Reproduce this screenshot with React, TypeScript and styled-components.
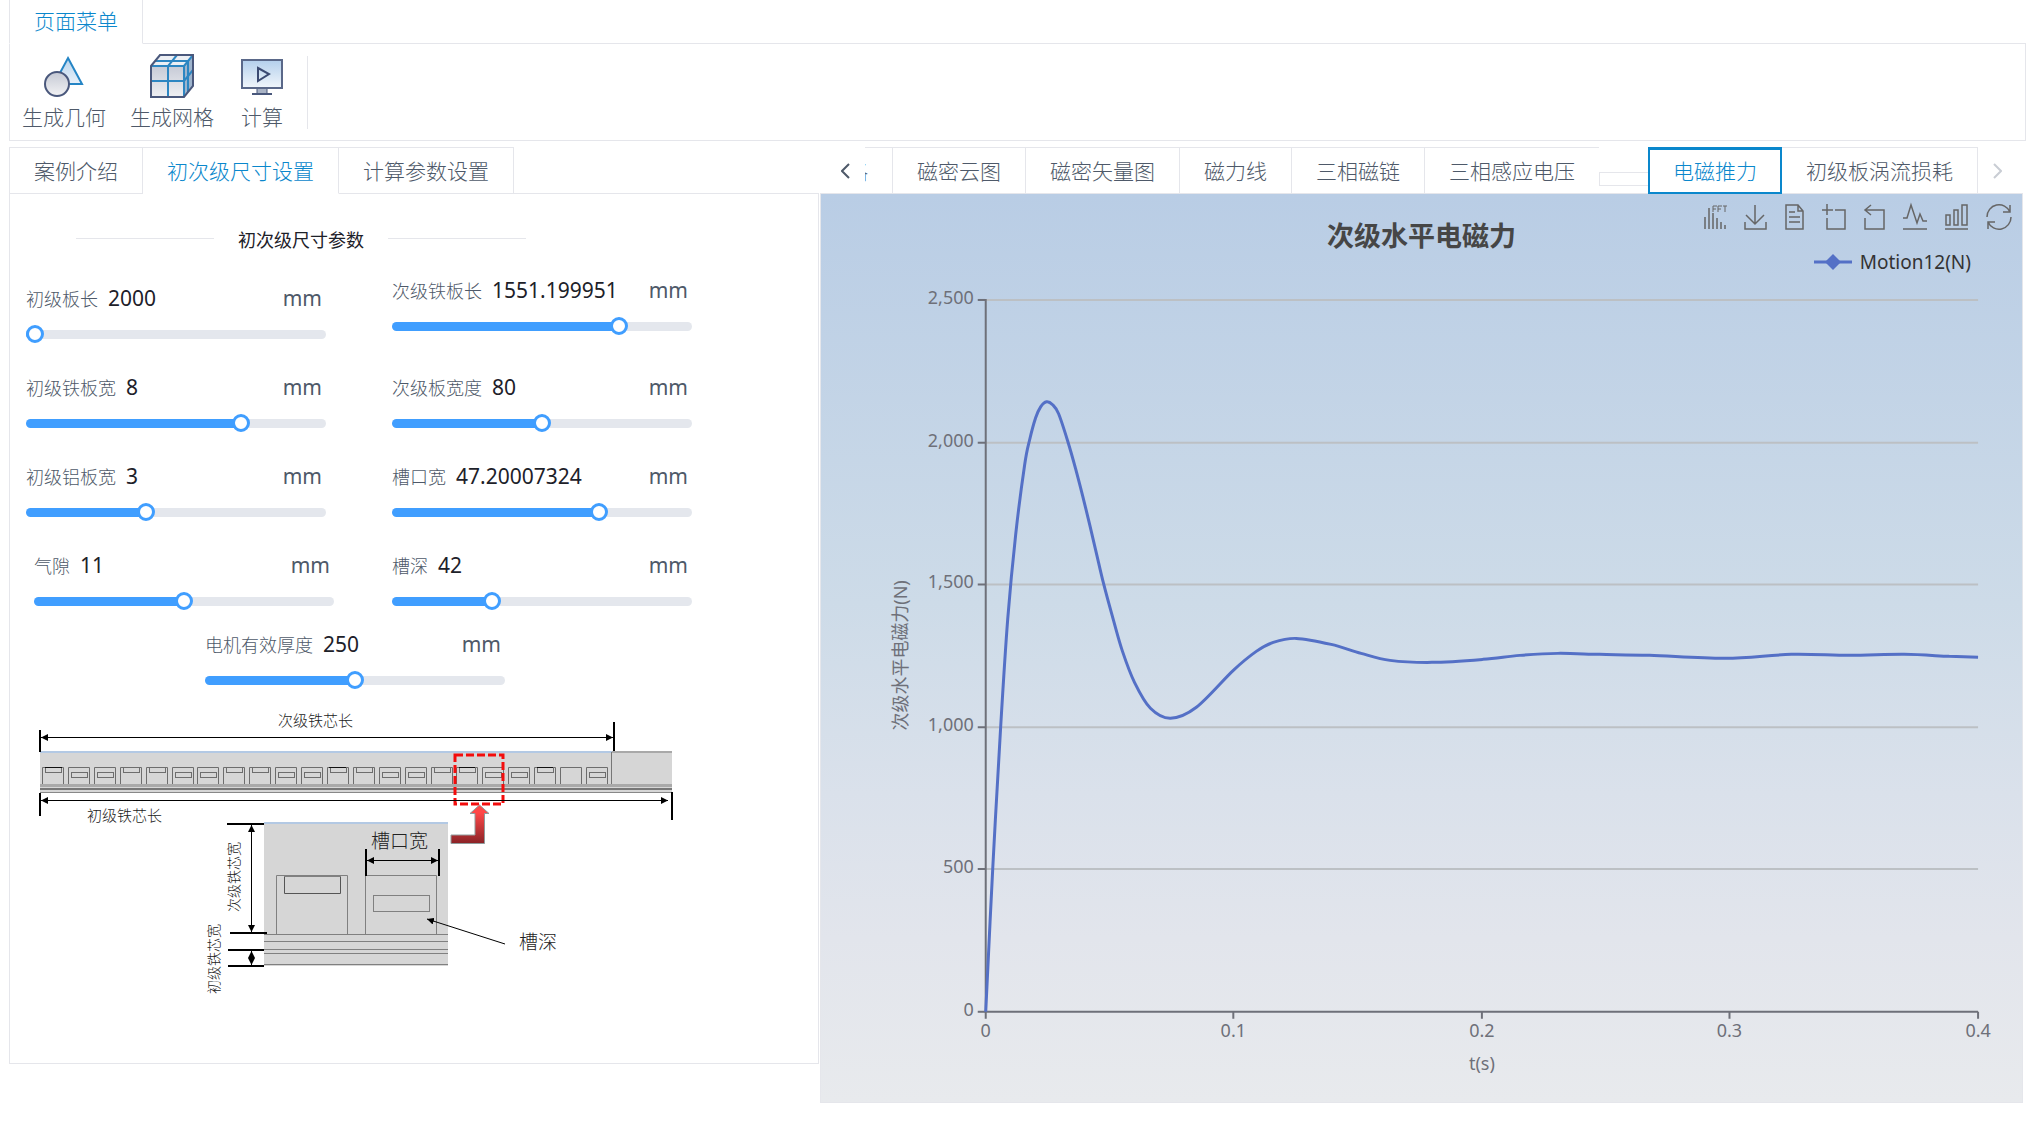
import React, { useState } from 'react';
import styled, { createGlobalStyle } from 'styled-components';

const GlobalStyle = createGlobalStyle`
  * { box-sizing: border-box; }
  body {
    margin: 0;
    background: #fff;
    color: #4e5969;
    font-family: "Noto Sans", "Noto Sans CJK SC", sans-serif;
    font-size: 21px;
  }
  button { font: inherit; font-weight: 300; color: inherit; background: none; border: 0; padding: 0; cursor: pointer; }
`;

const line = '#e5e6eb';
const accent = '#0a87cc';

const Page = styled.div`
  display: flex;
  flex-direction: column;
  gap: 6px;
  padding: 0 7px 20px 9px;
`;

const TabBar = styled.div<{ $h: number }>`
  display: flex;
  height: ${p => p.$h}px;
  box-shadow: inset 0 -1px 0 ${line};
`;

const Tab = styled.button<{ $active?: boolean; $top?: boolean }>`
  flex: none;
  padding: 0 24px ${p => (p.$top ? 0 : 2)}px;
  border-right: 1px solid ${line};
  border-top: ${p => (p.$top ? `1px solid ${line}` : '0')};
  border-bottom: 1px solid ${p => (p.$active ? '#fff' : line)};
  color: ${p => (p.$active ? accent : 'inherit')};
  white-space: nowrap;
  line-height: 30px;
  &:first-child { border-left: 1px solid ${line}; }
`;

const Toolbar = styled.div`
  display: flex;
  height: 97px;
  padding: 8px 12px 11px;
  border: 1px solid ${line};
  border-top: 0;
`;

const ToolGroup = styled.div`
  display: flex;
  gap: 24px;
  padding-right: 21px;
  border-right: 1px solid ${line};
  margin: 4px 0 0;
  height: 73px;
`;

const Tool = styled.button`
  display: flex;
  flex-direction: column;
  align-items: center;
  justify-content: space-between;
  min-width: 48px;
  line-height: 24px;
  svg { margin-top: -2px; }
`;

const Main = styled.main`
  display: grid;
  grid-template-columns: 810fr 1203fr;
  gap: 1px;
  padding-right: 3px;
  align-items: start;
`;

const Side = styled.section`min-width: 0;`;

const SideBody = styled.div`
  border: 1px solid ${line};
  border-top: 0;
  padding: 31px 16px 63px;
`;

const Divider = styled.div`
  display: flex;
  align-items: center;
  gap: 24px;
  width: 450px;
  height: 27px;
  margin: 0 0 24px 50px;
  font-size: 18px;
  color: #1d2129;
  white-space: nowrap;
  &::before, &::after { content: ""; flex: 1; height: 1px; background: ${line}; }
`;

const Fields = styled.div`
  display: grid;
  grid-template-columns: 300px 300px;
  gap: 30px 66px;
  align-items: end;
`;

const FieldBox = styled.div<{ $raised?: boolean; $indent?: boolean }>`
  width: 300px;
  padding-bottom: ${p => (p.$raised ? 12 : 4)}px;
  margin-left: ${p => (p.$indent ? 8 : 0)}px;
`;

const FieldHead = styled.div`
  display: flex;
  align-items: baseline;
  height: 28px;
  line-height: 28px;
  margin-bottom: 18px;
  padding-right: 4px;
  label { font-size: 18px; font-weight: 300; margin-right: 10px; }
  output { color: #1d2129; flex: 1; }
`;

const Range = styled.input`
  display: block;
  appearance: none;
  width: 100%;
  height: 9px;
  margin: 0;
  border-radius: 5px;
  background: linear-gradient(#409eff, #409eff) no-repeat #e4e7ed;
  background-size: calc(9px + (100% - 18px) * var(--fill)) 100%;
  &::-webkit-slider-runnable-track { height: 9px; }
  &::-webkit-slider-thumb {
    appearance: none;
    width: 18px;
    height: 18px;
    margin-top: -5px;
    border: 3px solid #409eff;
    border-radius: 50%;
    background: #fff;
  }
`;

const CenterField = styled.div`
  margin: 20px 0 0 179px;
`;

const Drawing = styled.svg`
  display: block;
  margin-top: 11px;
  text { font-family: "Noto Sans CJK SC", sans-serif; font-weight: 300; fill: #222; }
`;

const Result = styled.section`min-width: 0;`;

const ResultTabs = styled.div`
  display: flex;
  height: 47px;
  box-shadow: inset 0 -1px 0 ${line};
`;

const Arrow = styled.button<{ $w: number; $muted?: boolean }>`
  flex: none;
  width: ${p => p.$w}px;
  color: ${p => (p.$muted ? '#c9cdd4' : '#4e5969')};
  display: flex;
  align-items: center;
  justify-content: flex-end;
  padding-right: ${p => (p.$muted ? 21 : 15)}px;
`;

const Strip = styled.div`
  display: flex;
  flex: 1;
  overflow: hidden;
`;

const ResultTab = styled.button<{ $edge?: 'left' | 'open' }>`
  display: flex;
  flex: none;
  justify-content: flex-end;
  align-items: center;
  width: ${p => (p.$edge === 'left' ? '28px' : 'auto')};
  overflow: hidden;
  padding: 0 24px;
  padding-left: ${p => (p.$edge === 'left' ? 0 : 24)}px;
  border-top: 1px solid ${line};
  border-bottom: 1px solid ${line};
  border-right: ${p => (p.$edge === 'open' ? 0 : 1)}px solid ${line};
  white-space: nowrap;
  line-height: 30px;
`;

const ActiveTab = styled.button`
  flex: none;
  width: 134px;
  border: 2px solid ${accent};
  border-top-width: 3px;
  color: ${accent};
  white-space: nowrap;
  line-height: 30px;
`;

const TabGap = styled.div`
  flex: none;
  align-self: flex-end;
  width: 49px;
  height: 14px;
  margin-bottom: 8px;
  border: 1px solid ${line};
  border-right: 0;
`;

const ChartPanel = styled.div`
  background: linear-gradient(#b9cde5 0%, #cddbe8 45%, #dae1eb 66%, #e2e5ec 82%, #e8eaed 100%);
  border: 1px solid ${line};
  border-top: 0;
`;

const ChartHead = styled.header`
  display: grid;
  grid-template-columns: 1fr auto 1fr;
  height: 52px;
  padding: 10px 10px 0;
`;

const ChartTitle = styled.h2`
  grid-column: 2;
  margin: 12px 0 0;
  font-size: 27px;
  line-height: 40px;
  font-weight: 700;
  color: #464646;
`;

const Toolbox = styled.div`
  display: flex;
  justify-content: flex-end;
  gap: 18px;
  height: 26px;
  color: #666;
  svg { display: block; }
`;

const Legend = styled.div`
  display: flex;
  justify-content: flex-end;
  align-items: center;
  gap: 8px;
  height: 32px;
  padding-right: 51px;
  font-size: 19px;
  line-height: 30px;
  color: #333;
`;

const Plot = styled.svg`
  display: block;
  width: 100%;
  height: auto;
  text { font-family: "Noto Sans", "Noto Sans CJK SC", sans-serif; font-size: 18px; fill: #6e7079; }
`;

type FieldProps = {
  id: string; label: string; value: number; min?: number; max: number; raised?: boolean; indent?: boolean;
};

function Field({ id, label, value, min = 0, max, raised, indent }: FieldProps) {
  const [v, setV] = useState(value);
  const fill = { '--fill': (v - min) / (max - min) } as React.CSSProperties;
  return (
    <FieldBox $raised={raised} $indent={indent}>
      <FieldHead>
        <label htmlFor={id}>{label}</label>
        <output htmlFor={id}>{v}</output>
        <span>mm</span>
      </FieldHead>
      <Range id={id} type="range" step="any" min={min} max={max} value={v} style={fill}
        onChange={e => setV(Number(e.target.value))} />
    </FieldBox>
  );
}

const GeometryIcon = () => (
  <svg width="44" height="44" viewBox="0 0 44 44">
    <defs>
      <linearGradient id="tri" x1="0" y1="0" x2="0" y2="1"><stop offset="0" stopColor="#b9d4ec" /><stop offset="1" stopColor="#e8f1fa" /></linearGradient>
      <linearGradient id="cir" x1="0" y1="0" x2="0" y2="1"><stop offset="0" stopColor="#c5c9d4" /><stop offset="1" stopColor="#f2f2f4" /></linearGradient>
    </defs>
    <path d="M26 4 40 30H12Z" fill="url(#tri)" stroke="#2585c5" strokeWidth="2" />
    <circle cx="15" cy="30" r="12" fill="url(#cir)" stroke="#4a587c" strokeWidth="2" />
  </svg>
);

const MeshIcon = () => (
  <svg width="44" height="44" viewBox="0 0 44 44">
    <defs><linearGradient id="face" x1="0" y1="0" x2="0" y2="1"><stop offset="0" stopColor="#c6cad6" /><stop offset="1" stopColor="#eff0f3" /></linearGradient></defs>
    <path d="M1 12H34V43H1Z" fill="url(#face)" />
    <path d="M1 12 10 1H43L34 12Z" fill="#eceff4" />
    <path d="M34 12 43 1V32L34 43Z" fill="#9eb4cd" />
    <path d="M1 12H34V43M34 12 43 1M18 43V12L27 1M1 27H34L43 16M5 7H38V38" fill="none" stroke="#2d86c2" strokeWidth="2" />
    <path d="M1 12 10 1H43V32L34 43H1Z" fill="none" stroke="#4a587c" strokeWidth="2" />
  </svg>
);

const ComputeIcon = () => (
  <svg width="44" height="44" viewBox="0 0 44 44">
    <defs><linearGradient id="scr" x1="0" y1="0" x2="0" y2="1"><stop offset="0" stopColor="#b3cfec" /><stop offset="1" stopColor="#f1f6fb" /></linearGradient></defs>
    <path d="M17 34h10v6H17z" fill="#aab4c6" stroke="#4a587c" />
    <rect x="2" y="6" width="40" height="28" fill="url(#scr)" stroke="#5a6889" strokeWidth="2" />
    <path d="M12 40h20" stroke="#4a587c" strokeWidth="2" />
    <path d="M18 14 29 20 18 27Z" fill="none" stroke="#3b4a72" strokeWidth="2" />
  </svg>
);

const toolIcons: { name: string; w: number; body: React.ReactNode }[] = [
  { name: 'FFT', w: 22, body: (<><path d="M1 13v12M5 4v21M9 9v16M13 14v11M17 18v7M21 21v4" />
    <path d="M9 8V2h4M9 5h3M14 8V2h4M14 5h3M19 2h4M21 2v6" strokeWidth="1" /></>) },
  { name: '下载', w: 23, body: <path d="M11 1v18M2 11l9 9 9-9M1 18v7h21v-7" /> },
  { name: '数据视图', w: 19, body: <path d="M1 1h12l5 6v18H1ZM13 1v6h5M4 8h6M4 13h11M4 18h11" /> },
  { name: '区域缩放', w: 24, body: <path d="M5 0v11M0 6h11M13 6h10v19H5V14" /> },
  { name: '缩放还原', w: 21, body: <path d="M7 1 1 6l6 5M1 6h19v19H1V14" /> },
  { name: '折线图', w: 24, body: <path d="M0 14h4L8 1l6 18 3-9 3 7h4M0 25h24" /> },
  { name: '柱状图', w: 23, body: <path d="M1 11h4v10H1ZM9 6h4v15H9ZM17 1h5v20h-5ZM0 25h23" /> },
  { name: '还原', w: 26, body: <path d="M1 13A12 12 0 0 1 24 8M24 1v7h-7M25 13A12 12 0 0 1 2 18M2 25v-7h7" /> },
];

const slotKinds = 'TMMTTMMTTMMTTMMTTMMT-M'.split('');

const dimensionLines = [
  'M41 737.500H613', 'M41 800.500H668', 'M251.500 825V932', 'M251.500 951V965', 'M367 860.500H438',
];

const MotorDrawing = () => (
  <Drawing width="660" height="300" viewBox="26 700 660 300" role="img" aria-label="电机尺寸示意图">
    <defs>
      <marker id="ar" viewBox="0 0 8 8" refX="8" refY="4" markerWidth="7" markerHeight="7" markerUnits="userSpaceOnUse" orient="auto-start-reverse"><path d="M0 0 8 4 0 8Z" /></marker>
      <linearGradient id="red" x1="0" y1="0" x2="0" y2="1"><stop offset="0.2" stopColor="#ff4848" /><stop offset="1" stopColor="#8a2327" /></linearGradient>
    </defs>
    <rect x="40" y="751" width="632" height="42" fill="#d6d6d6" />
    <path d="M40 752H612" stroke="#b3c9e4" strokeWidth="2" />
    <path d="M612 752H672" stroke="#a9a9a9" strokeWidth="2" />
    <path d="M611.500 752V784" stroke="#777" />
    {slotKinds.map((k, i) => {
      const x = Math.round(42 + i * 25.9) + 0.5;
      return (
        <g key={i} fill="none" stroke="#6d6d6d">
          <path d={`M${x} 784V767.500H${x + 21}V784`} />
          {k === 'T' && <rect x={x + 3} y="767.500" width="16" height="5" />}
          {k === 'M' && <rect x={x + 3} y="772.500" width="16" height="5" />}
        </g>
      );
    })}
    <path d="M45 767.500H62M329 767.500H346M459 767.500H475M537 767.500H553" stroke="#111" />
    <rect x="40" y="784" width="632" height="3" fill="#a9a9a9" />
    <rect x="40" y="788" width="632" height="2" fill="#777" />
    <rect x="40" y="792" width="632" height="1" fill="#888" />
    <path d="M40 730V752M614 722V751M40 793V816M672 792V820" stroke="#000" strokeWidth="2" />
    <text x="278" y="726" fontSize="15">次级铁芯长</text>
    <text x="87" y="821" fontSize="15">初级铁芯长</text>
    <rect x="455" y="755" width="48" height="49" fill="none" stroke="#f30d0d" strokeWidth="3" strokeDasharray="8 3" />
    <path d="M479.500 805 489 813.500H484.500V843.500H451V835H475V813.500H470Z" fill="url(#red)" stroke="#8f9c9c" />

    <rect x="264" y="822" width="184" height="144" fill="#d6d6d6" />
    <path d="M264 823H448" stroke="#b3c9e4" strokeWidth="2" />
    <g fill="none" stroke="#808080">
      <path d="M276.500 934V875.500H347.500V934M365.500 934V875.500H436.500V934" />
      <path d="M284.500 877V893.500H340.500V877" stroke="#555" />
      <path d="M284 876.500H341" />
      <rect x="373.500" y="895.500" width="56" height="16" />
      <path d="M264 934.500H448M264 941.500H448M264 949.500H448M264 953.500H448M264 964.500H448" />
    </g>
    <path d="M227 824H264M230 933H267M228 950H264M228 966H264M366 849V876M439 849V876" stroke="#000" strokeWidth="2" />
    {dimensionLines.map(d => <path key={d} d={d} stroke="#000" markerStart="url(#ar)" markerEnd="url(#ar)" />)}
    <path d="M505 944 427 919" stroke="#000" markerEnd="url(#ar)" />
    <text x="371" y="848" fontSize="19">槽口宽</text>
    <text x="519" y="949" fontSize="19">槽深</text>
    <text transform="translate(239 912) rotate(-90)" fontSize="14">次级铁芯宽</text>
    <text transform="translate(219 994) rotate(-90)" fontSize="14">初级铁芯宽</text>
  </Drawing>
);

// Sampled points of the thrust curve in plot coordinates.
const samples: [number, number][] = [
  [985, 1013], [992, 870], [1000, 727], [1007, 620], [1015, 535], [1024, 465], [1029, 440], [1035, 418], [1040, 407], [1046, 402],
  [1052, 405], [1058, 414], [1067, 441], [1075, 469], [1085, 508], [1095, 550], [1103, 584], [1113, 621],
  [1122, 652], [1134, 683], [1150, 709], [1170, 719], [1196, 708],
  [1233, 671], [1256, 652], [1273, 643], [1296, 639], [1331, 645], [1361, 654], [1390, 661], [1432, 663], [1483, 660],
  [1520, 656], [1558, 654], [1600, 655], [1650, 656], [1726, 659], [1792, 655], [1850, 656], [1905, 655], [1950, 657], [1979, 658],
];

function smooth(p: [number, number][]) {
  let d = `M${p[0][0]} ${p[0][1]}`;
  for (let i = 0; i < p.length - 1; i++) {
    const a = p[Math.max(i - 1, 0)], b = p[i], c = p[i + 1], e = p[Math.min(i + 2, p.length - 1)];
    d += `C${b[0] + (c[0] - a[0]) / 6} ${b[1] + (c[1] - a[1]) / 6} ${c[0] - (e[0] - b[0]) / 6} ${c[1] - (e[1] - b[1]) / 6} ${c[0]} ${c[1]}`;
  }
  return d;
}

const yTicks: [string, number][] = [['0', 1013], ['500', 870], ['1,000', 728], ['1,500', 585], ['2,000', 443], ['2,500', 300]];
const xTicks: [string, number][] = [['0', 985], ['0.1', 1233], ['0.2', 1482], ['0.3', 1730], ['0.4', 1979]];

const ForceChart = () => (
  <Plot viewBox="820 278 1203 825" role="img" aria-label="次级水平电磁力曲线">
    {yTicks.map(([t, y]) => (
      <g key={t}>
        {y !== 1013 && <path d={`M985 ${y}H1979`} stroke="#bcc0c4" strokeWidth="2" />}
        <path d={`M977 ${y}H985`} stroke="#6e7079" strokeWidth="2" />
        <text x="973" y={y + 4} textAnchor="end">{t}</text>
      </g>
    ))}
    {xTicks.map(([t, x]) => (
      <g key={t}>
        <path d={`M${x} 1013V1020`} stroke="#6e7079" strokeWidth="2" />
        <text x={x} y="1038" textAnchor="middle">{t}</text>
      </g>
    ))}
    <path d="M985 299V1013H1979" fill="none" stroke="#6e7079" strokeWidth="2" />
    <path d={smooth(samples)} fill="none" stroke="#5470c6" strokeWidth="3" strokeLinejoin="bevel" />
    <text x="1482" y="1071" textAnchor="middle">t(s)</text>
    <text transform="translate(906 656) rotate(-90)" textAnchor="middle">次级水平电磁力(N)</text>
  </Plot>
);

const Chevron = ({ left }: { left?: boolean }) => (
  <svg width="9" height="16" viewBox="0 0 9 16" fill="none" stroke="currentColor" strokeWidth="2">
    <path d={left ? 'M8 1 1 8l7 7' : 'M1 1l7 7-7 7'} />
  </svg>
);

export default function App() {
  return (
    <>
      <GlobalStyle />
      <Page>
        <nav>
          <TabBar $h={44}><Tab $active>页面菜单</Tab></TabBar>
          <Toolbar>
            <ToolGroup>
              <Tool><GeometryIcon />生成几何</Tool>
              <Tool><MeshIcon />生成网格</Tool>
              <Tool><ComputeIcon />计算</Tool>
            </ToolGroup>
          </Toolbar>
        </nav>
        <Main>
          <Side>
            <TabBar $h={47}>
              <Tab $top>案例介绍</Tab>
              <Tab $top $active>初次级尺寸设置</Tab>
              <Tab $top>计算参数设置</Tab>
            </TabBar>
            <SideBody>
              <Divider>初次级尺寸参数</Divider>
              <Fields>
                <Field id="primaryLength" label="初级板长" value={2000} min={2000} max={3000} />
                <Field id="secondaryLength" label="次级铁板长" value={1551.199951} max={2007} raised />
                <Field id="primaryIron" label="初级铁板宽" value={8} max={10.93} />
                <Field id="secondaryWidth" label="次级板宽度" value={80} max={160} />
                <Field id="primaryAluminium" label="初级铝板宽" value={3} max={7.6} />
                <Field id="slotWidth" label="槽口宽" value={47.20007324} max={67.2} />
                <Field id="airGap" label="气隙" value={11} max={22} indent />
                <Field id="slotDepth" label="槽深" value={42} max={130} />
              </Fields>
              <CenterField>
                <Field id="thickness" label="电机有效厚度" value={250} max={500} />
              </CenterField>
              <MotorDrawing />
            </SideBody>
          </Side>
          <Result>
            <ResultTabs>
              <Arrow $w={45} aria-label="向左滚动"><Chevron left /></Arrow>
              <Strip>
                <ResultTab $edge="left">网格</ResultTab>
                <ResultTab>磁密云图</ResultTab>
                <ResultTab>磁密矢量图</ResultTab>
                <ResultTab>磁力线</ResultTab>
                <ResultTab>三相磁链</ResultTab>
                <ResultTab $edge="open">三相感应电压</ResultTab>
                <TabGap />
                <ActiveTab>电磁推力</ActiveTab>
                <ResultTab>初级板涡流损耗</ResultTab>
              </Strip>
              <Arrow $w={36} $muted aria-label="向右滚动"><Chevron /></Arrow>
            </ResultTabs>
            <ChartPanel>
              <ChartHead>
                <ChartTitle>次级水平电磁力</ChartTitle>
                <Toolbox>
                  {toolIcons.map(t => (
                    <button key={t.name} aria-label={t.name}>
                      <svg width={t.w} height="26" viewBox={`0 0 ${t.w} 26`} fill="none" stroke="currentColor" strokeWidth="1.5" overflow="visible">{t.body}</svg>
                    </button>
                  ))}
                </Toolbox>
              </ChartHead>
              <Legend>
                <svg width="38" height="18" viewBox="0 0 38 18"><path d="M0 9H38" stroke="#5470c6" strokeWidth="3" /><path d="M19 1 27 9 19 17 11 9Z" fill="#5470c6" /></svg>
                Motion12(N)
              </Legend>
              <ForceChart />
            </ChartPanel>
          </Result>
        </Main>
      </Page>
    </>
  );
}
